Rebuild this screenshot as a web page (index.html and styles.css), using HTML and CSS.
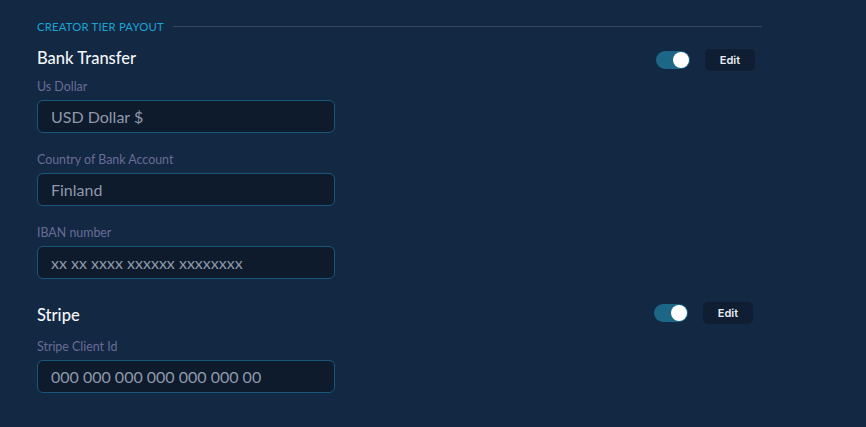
FILE: index.html
```html
<!DOCTYPE html>
<html lang="en">
<head>
    <meta charset="UTF-8">
    <meta name="viewport" content="width=device-width, initial-scale=1.0">
    <title>Creator Tier Payout</title>
    <link rel="stylesheet" href="styles.css">
</head>
<body>
    <div class="payout">
        <div class="section-title">
            <span>CREATOR TIER PAYOUT</span>
            <div class="rule"></div>
        </div>

        <div class="method">
            <div class="method-head">
                <h2>Bank Transfer</h2>
                <div class="actions">
                    <label class="switch"><input type="checkbox" checked><span class="knob"></span></label>
                    <button class="edit-btn">Edit</button>
                </div>
            </div>

            <div class="field">
                <label>Us Dollar</label>
                <div class="input">USD Dollar $</div>
            </div>
            <div class="field">
                <label>Country of Bank Account</label>
                <div class="input">Finland</div>
            </div>
            <div class="field">
                <label>IBAN number</label>
                <div class="input">xx xx xxxx xxxxxx xxxxxxxx</div>
            </div>
        </div>

        <div class="method stripe">
            <div class="method-head">
                <h2>Stripe</h2>
                <div class="actions shifted">
                    <label class="switch"><input type="checkbox" checked><span class="knob"></span></label>
                    <button class="edit-btn">Edit</button>
                </div>
            </div>

            <div class="field">
                <label>Stripe Client Id</label>
                <div class="input">000 000 000 000 000 000 00</div>
            </div>
        </div>
    </div>
</body>
</html>
```

FILE: styles.css
```css
body {
    margin: 0;
    background-color: #132843;
    font-family: Lato, 'Open Sans', sans-serif;
    color: #fff;
}

.payout {
    width: 725px;
    padding: 19px 0 0 37px;
}

.section-title {
    display: flex;
    align-items: center;
    gap: 9px;
    height: 14px;
    font-size: 11.3px;
    letter-spacing: 0.2px;
    color: #1ba3d3;
}

.rule {
    flex: 1;
    height: 1px;
    background-color: #36465e;
}

.method-head {
    display: flex;
    justify-content: space-between;
    align-items: center;
    width: 718px;
    height: 22px;
    margin-top: 16px;
}

.method-head h2 {
    align-self: flex-start;
    margin: -1px 0 0;
    font-size: 16.5px;
    line-height: 20px;
    font-weight: 500;
    color: #f4f6fa;
}

.stripe .method-head h2 {
    margin-top: 3px;
}

.actions {
    display: flex;
    align-items: center;
    gap: 15px;
}

.actions.shifted {
    margin-right: 2px;
}

.switch {
    position: relative;
    width: 34px;
    height: 18px;
}

.switch input {
    display: none;
}

.switch .knob {
    display: block;
    width: 100%;
    height: 100%;
    border-radius: 9px;
    background-color: #1c6686;
}

.switch .knob::after {
    content: "";
    position: absolute;
    top: 1px;
    right: 1px;
    width: 16px;
    height: 16px;
    border-radius: 50%;
    background-color: #fff;
}

.edit-btn {
    width: 50px;
    height: 22px;
    border: none;
    border-radius: 5px;
    background-color: #0f1e33;
    color: #e8ecf2;
    font-family: Inter, Roboto, sans-serif;
    font-size: 11px;
    font-weight: 600;
    cursor: pointer;
}

.field {
    margin-top: 9px;
}

.field + .field {
    margin-top: 20px;
}

.field label {
    display: block;
    font-size: 12.4px;
    line-height: 14px;
    color: #6a6c96;
    margin-bottom: 6px;
}

.input {
    box-sizing: border-box;
    width: 298px;
    height: 33px;
    padding: 0 13px;
    border: 1px solid #19577a;
    border-radius: 6px;
    background-color: #0e1b2d;
    color: #8e98ab;
    font-size: 16px;
    line-height: 31px;
}

.stripe .method-head {
    margin-top: 23px;
}

.stripe .field {
    margin-top: 16px;
}
```
